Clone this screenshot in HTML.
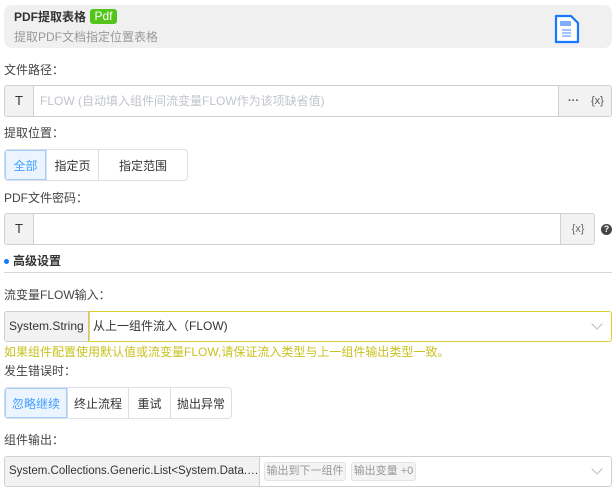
<!DOCTYPE html>
<html><head><meta charset="utf-8"><style>
*{box-sizing:border-box;margin:0;padding:0}
body{width:616px;height:494px;background:#fff;font-family:"Liberation Sans","Noto Sans CJK SC",sans-serif;font-size:12px;color:#333;position:relative;overflow:hidden}
.a{position:absolute}
.lbl{position:absolute;left:4px;font-size:12px;color:#444;line-height:14px}
.box{position:absolute;border:1px solid #d0d0d0;border-radius:3px;background:#fff;overflow:hidden}
.gr{background:#f2f2f2}
.seg{position:absolute;display:flex;border:1px solid #dcdfe6;border-radius:4px;overflow:hidden;height:32px}
.seg div{flex:none;display:flex;align-items:center;justify-content:center;border-left:1px solid #dcdfe6;font-size:12px;color:#333}
.seg div:first-child{border-left:none;background:#ecf5ff;color:#409eff;box-shadow:inset 0 0 0 1px #a0cfff}
.chev{position:absolute;width:8px;height:8px;border-right:1px solid #bbb;border-bottom:1px solid #bbb;transform:rotate(45deg)}
.tag{position:absolute;top:5px;height:19px;background:#f4f4f5;border:1px solid #e4e4e6;border-radius:3px;font-size:11px;color:#999;line-height:17px;text-align:center;white-space:nowrap}
</style></head><body>
<div class="a" style="left:4px;top:5px;width:608px;height:43px;background:#f0f0f0;border-radius:8px"></div>
<div class="a" style="left:14px;top:10px;font-size:12px;font-weight:bold;color:#333;line-height:15px;white-space:nowrap">PDF提取表格</div>
<div class="a" style="left:90px;top:9px;width:27px;height:15px;background:#52c41a;border-radius:3px;color:#fff;font-size:12px;line-height:15px;text-align:center">Pdf</div>
<div class="a" style="left:14px;top:30px;font-size:12px;color:#999;line-height:14px">提取PDF文档指定位置表格</div>
<svg class="a" style="left:554px;top:14px" width="26" height="30" viewBox="0 0 26 30"><path d="M2 2 H17 L24 9 V28 H2 Z" fill="#fff" stroke="#1677ff" stroke-width="2.2" stroke-linejoin="round"/><rect x="6" y="7" width="11" height="5" fill="#7fb0ff"/><path d="M8 16h9M8 19h9M8 22h9" stroke="#7fb0ff" stroke-width="1.5"/></svg>

<div class="lbl" style="top:63px">文件路径：</div>
<div class="box" style="left:4px;top:85px;width:608px;height:32px">
<div class="a gr" style="left:0;top:0;width:29px;height:30px;border-right:1px solid #d0d0d0;text-align:center;line-height:30px;font-size:13px">T</div>
<div class="a" style="left:35px;top:0;line-height:30px;color:#c0c4cc;font-size:12px">FLOW (自动填入组件间流变量FLOW作为该项缺省值)</div>
<div class="a gr" style="left:553px;top:0;width:54px;height:30px;border-left:1px solid #d0d0d0;line-height:30px;font-size:11px;color:#555"><span style="position:absolute;left:9px;font-weight:bold">···</span><span style="position:absolute;left:32px">{x}</span></div>
</div>

<div class="lbl" style="top:126px">提取位置：</div>
<div class="seg" style="left:4px;top:149px;width:184px"><div style="width:41px">全部</div><div style="width:52px">指定页</div><div style="width:89px">指定范围</div></div>

<div class="lbl" style="top:191px">PDF文件密码：</div>
<div class="box" style="left:4px;top:213px;width:591px;height:32px">
<div class="a gr" style="left:0;top:0;width:29px;height:30px;border-right:1px solid #d0d0d0;text-align:center;line-height:30px;font-size:13px">T</div>
<div class="a gr" style="left:555px;top:0;width:35px;height:30px;border-left:1px solid #d0d0d0;line-height:30px;font-size:11px;color:#666;text-align:center">{x}</div>
</div>
<div class="a" style="left:601px;top:224px;width:11px;height:11px;border-radius:50%;background:#444;color:#fff;font-size:9px;font-weight:bold;line-height:11px;text-align:center">?</div>

<div class="a" style="left:4px;top:259px;width:5px;height:5px;border-radius:50%;background:#1677ff"></div>
<div class="a" style="left:13px;top:254px;font-size:12px;font-weight:bold;color:#333;line-height:14px">高级设置</div>
<div class="a" style="left:4px;top:272px;width:608px;height:1px;background:#d5d5d5"></div>

<div class="lbl" style="top:288px">流变量FLOW输入：</div>
<div class="a gr" style="left:4px;top:311px;width:86px;height:31px;border:1px solid #d0d0d0;border-radius:3px 0 0 3px;line-height:29px;padding-left:4px;font-size:12px;white-space:nowrap">System.String</div>
<div class="a" style="left:88px;top:311px;width:524px;height:31px;border:1px solid #d8d030;border-radius:0 3px 3px 0;line-height:29px;padding-left:4px;font-size:12px">从上一组件流入（FLOW)</div>
<div class="chev" style="left:593px;top:320px"></div>
<div class="a" style="left:4px;top:345px;font-size:12px;color:#c9c21e;line-height:14px;white-space:nowrap">如果组件配置使用默认值或流变量FLOW,请保证流入类型与上一组件输出类型一致。</div>

<div class="lbl" style="top:364px">发生错误时：</div>
<div class="seg" style="left:4px;top:387px;width:228px"><div style="width:62px">忽略继续</div><div style="width:61px">终止流程</div><div style="width:42px">重试</div><div style="width:61px">抛出异常</div></div>

<div class="lbl" style="top:433px">组件输出：</div>
<div class="box" style="left:4px;top:456px;width:608px;height:31px">
<div class="a gr" style="left:0;top:0;width:255px;height:29px;border-right:1px solid #d0d0d0;line-height:29px;padding-left:4px;font-size:11.5px;white-space:nowrap;overflow:hidden;text-overflow:ellipsis">System.Collections.Generic.List&lt;System.Data.DataTable&gt;</div>
<div class="tag" style="left:259px;width:82px">输出到下一组件</div>
<div class="tag" style="left:346px;width:65px">输出变量 +0</div>
</div>
<div class="chev" style="left:593px;top:465px"></div>
</body></html>
